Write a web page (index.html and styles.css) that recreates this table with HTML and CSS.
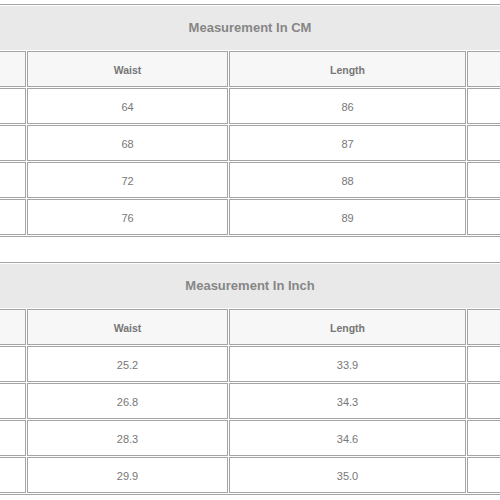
FILE: index.html
```html
<!DOCTYPE html>
<html>
<head>
<meta charset="utf-8">
<link rel="stylesheet" href="styles.css">
</head>
<body>
<div class="page">
  <table class="size-table">
    <colgroup>
      <col class="col-size">
      <col class="col-waist">
      <col class="col-length">
      <col class="col-hip">
    </colgroup>
    <tr><th colspan="4" class="title">Measurement In CM</th></tr>
    <tr class="head"><th>Size</th><th>Waist</th><th>Length</th><th>Hip</th></tr>
    <tr><td>S</td><td>64</td><td>86</td><td>90</td></tr>
    <tr><td>M</td><td>68</td><td>87</td><td>94</td></tr>
    <tr><td>L</td><td>72</td><td>88</td><td>98</td></tr>
    <tr><td>XL</td><td>76</td><td>89</td><td>102</td></tr>
  </table>
  <table class="size-table">
    <colgroup>
      <col class="col-size">
      <col class="col-waist">
      <col class="col-length">
      <col class="col-hip">
    </colgroup>
    <tr><th colspan="4" class="title">Measurement In Inch</th></tr>
    <tr class="head"><th>Size</th><th>Waist</th><th>Length</th><th>Hip</th></tr>
    <tr><td>S</td><td>25.2</td><td>33.9</td><td>35.4</td></tr>
    <tr><td>M</td><td>26.8</td><td>34.3</td><td>37.0</td></tr>
    <tr><td>L</td><td>28.3</td><td>34.6</td><td>38.6</td></tr>
    <tr><td>XL</td><td>29.9</td><td>35.0</td><td>40.2</td></tr>
  </table>
</div>
</body>
</html>
```
FILE: styles.css
```css
html, body {
  margin: 0;
  padding: 0;
  overflow: hidden;
  background: #ffffff;
}

.page {
  width: 500px;
  display: flex;
  flex-direction: column;
  align-items: center;
  gap: 25px;
  padding-top: 4px;
}

.size-table {
  flex-shrink: 0;
  width: 692px;
  table-layout: fixed;
  border-collapse: separate;
  border-spacing: 1px;
  border: 1px solid #a4a4a4;
  font-family: "Liberation Sans", Arial, sans-serif;
}

.col-size { width: 120px; }
.col-waist { width: 201px; }
.col-length { width: 237px; }
.col-hip { width: 127px; }

.title {
  height: 43px;
  padding: 0 0 1px;
  background: #e9e9e9;
  color: #868686;
  font-size: 13px;
  font-weight: bold;
  text-align: center;
}

.size-table td,
.head th {
  height: 33px;
  padding: 1px 0 0;
  border: 1px solid #a4a4a4;
  text-align: center;
  vertical-align: middle;
}

.head th {
  background: #f7f7f7;
  color: #767676;
  font-size: 10.5px;
  font-weight: bold;
}

.size-table td {
  background: #ffffff;
  color: #777777;
  font-size: 11px;
}
```
